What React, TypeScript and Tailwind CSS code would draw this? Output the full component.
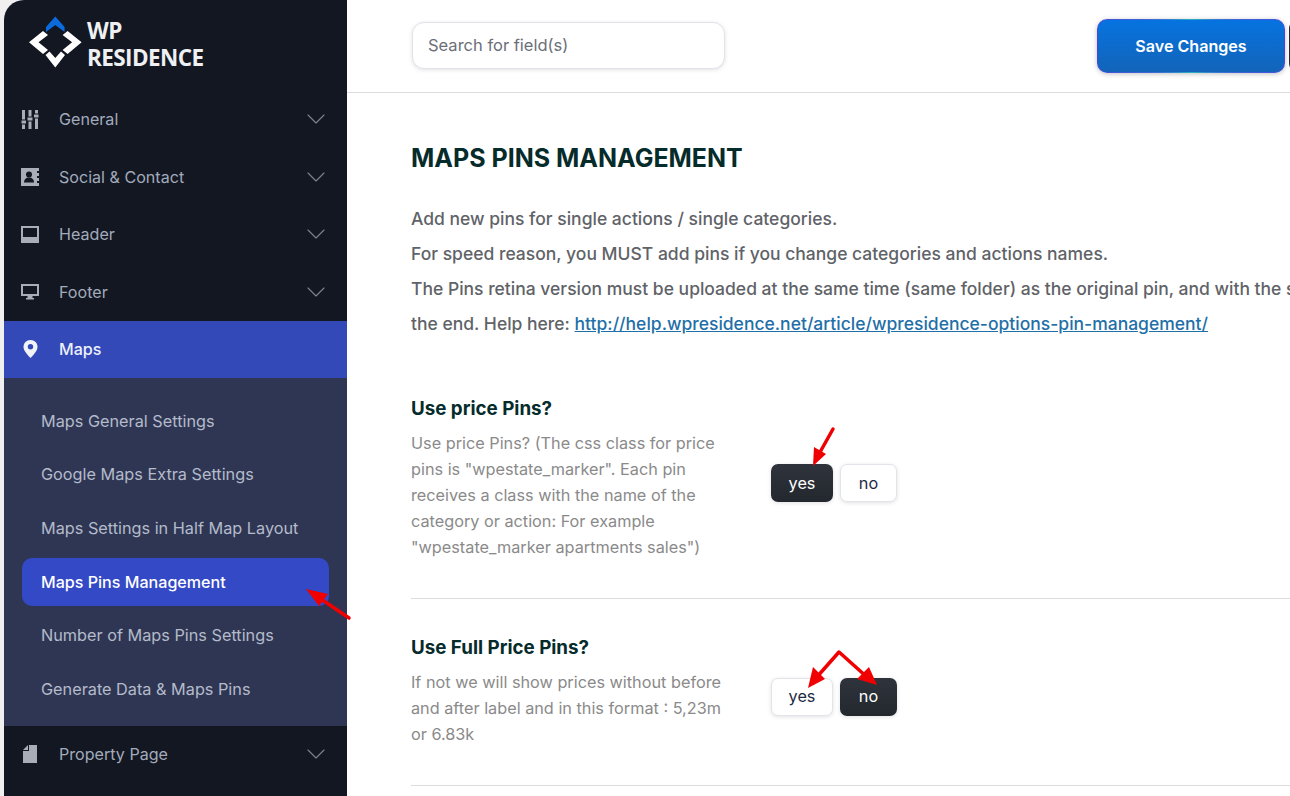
import { ChevronDown } from "lucide-react";
import type { ReactNode } from "react";

const inter = "font-['Inter',sans-serif]";

function SlidersIcon() {
  return (
    <svg width="18" height="19" viewBox="0 0 18 19" fill="#a9adb8">
      <rect x="1" y="0" width="3" height="19" />
      <rect x="7.500" y="0" width="3" height="19" />
      <rect x="14" y="0" width="3" height="19" />
      <rect x="0" y="10" width="5.500" height="4" stroke="#131722" />
      <rect x="6" y="7" width="6" height="4" stroke="#131722" />
      <rect x="12.500" y="4" width="5.500" height="4" stroke="#131722" />
    </svg>
  );
}

function ContactIcon() {
  return (
    <svg width="18" height="18" viewBox="0 0 18 18">
      <rect x="0" y="0" width="18" height="18" fill="#a9adb8" />
      <rect x="16" y="3" width="2" height="2" fill="#131722" />
      <rect x="16" y="8" width="2" height="2" fill="#131722" />
      <rect x="16" y="13" width="2" height="2" fill="#131722" />
      <circle cx="8" cy="6.500" r="3" fill="#131722" />
      <path d="M3 14.500c0-3 2-5 5-5s5 2 5 5z" fill="#131722" />
    </svg>
  );
}

function HeaderIcon() {
  return (
    <svg width="18" height="17" viewBox="0 0 18 17">
      <rect x="0" y="0" width="18" height="17" fill="#a9adb8" />
      <rect x="2" y="2" width="14" height="9" fill="#131722" />
    </svg>
  );
}

function FooterIcon() {
  return (
    <svg width="18" height="16" viewBox="0 0 18 16">
      <rect x="0" y="0" width="18" height="12" fill="#a9adb8" />
      <rect x="2" y="2" width="14" height="8" fill="#131722" />
      <rect x="6.500" y="12" width="5" height="2" fill="#a9adb8" />
      <rect x="5" y="14" width="8" height="1.500" fill="#a9adb8" />
    </svg>
  );
}

function PinIcon() {
  return (
    <svg width="15" height="18" viewBox="0 0 15 18">
      <path d="M7.500 0C3.400 0 .5 3 .5 6.900c0 3.300 3.800 8 7 11 3.200-3 7-7.700 7-11C14.500 3 11.600 0 7.500 0z" fill="#f1f3fb" />
      <circle cx="7.500" cy="6.800" r="2.700" fill="#3349b8" />
    </svg>
  );
}

function PageIcon() {
  return (
    <svg width="14" height="18" viewBox="0 0 14 18" fill="#a9adb8">
      <path d="M0 5 5 0v5z" />
      <path d="M0 6h6V0h8v18H0z" />
    </svg>
  );
}

function LogoMark() {
  return (
    <svg width="60" height="56" viewBox="24 15 60 56">
      <polygon points="46,27 55.300,16.500 64.600,27 64.600,32 55.300,25 46,32" fill="#0b6bdc" />
      <polygon points="43,31 29,42.300 43,54 48,50 38.500,42.300 48,35" fill="#fff" />
      <polygon points="67.600,31 81.600,42.300 67.600,54 62.600,50 72.100,42.300 62.600,35" fill="#fff" />
      <polygon points="45.500,55 55.300,67.500 65,55 61,51.500 55.300,58 49.500,51.500" fill="#fff" />
    </svg>
  );
}

function NavRow({ icon, label }: { icon: ReactNode; label: string }) {
  return (
    <div className="flex h-[57.5px] items-center pl-[17px] pr-[15px]">
      <div className="flex w-[18px] justify-center">{icon}</div>
      <span className="ml-[20px] flex-1 text-[16.1px] text-[#a2abbb]">{label}</span>
      <ChevronDown size={32} strokeWidth={0.85} className="text-[#7d838f]" />
    </div>
  );
}

function Toggle({ label, active, width }: { label: string; active: boolean; width: string }) {
  return (
    <div
      className={`flex h-[38px] items-center justify-center rounded-[7px] text-[16.25px] shadow-[0_1px_4px_rgba(0,0,0,0.12)] ${width} ${
        active ? "bg-gradient-to-b from-[#2f343c] to-[#23272e] text-white" : "border border-[#e3e4ea] bg-white text-[#1d2a44]"
      }`}
    >
      {label}
    </div>
  );
}

function OptionRow({
  title,
  description,
  yes,
  buttonsClass,
}: {
  title: string;
  description: string;
  yes: boolean;
  buttonsClass: string;
}) {
  return (
    <div className="border-b border-[#dcdcde] pb-[38px]">
      <h2 className="text-[18.75px] font-bold leading-[28px] text-[#062b2b]">{title}</h2>
      <div className="mt-[7px] flex items-center">
        <p className="w-[320px] text-[16.25px] leading-[26px] text-[#8a8a8a]">{description}</p>
        <div className={`ml-[40px] flex gap-[7px] ${buttonsClass}`}>
          <Toggle label="yes" active={yes} width="w-[62px]" />
          <Toggle label="no" active={!yes} width="w-[57px]" />
        </div>
      </div>
    </div>
  );
}

// red annotations drawn on top of the screenshot
function Annotations() {
  return (
    <svg className="pointer-events-none absolute left-0 top-0" width="1290" height="796" fill="none">
      <g stroke="#f00000" strokeWidth="3.5" strokeLinecap="round" strokeLinejoin="round">
        <path d="M349 618 318 597" />
        <path d="M833 429 819 454" />
        <path d="M816 678 839 652 868 678" />
      </g>
      <g fill="#f00000">
        <path d="M306 589 328 594 319 606z" />
        <path d="M813 466 814 447 826 454z" />
        <path d="M808 688 813 667 825 679z" />
        <path d="M877 685 857 679 869 667z" />
      </g>
    </svg>
  );
}

export default function App() {
  const subItems = [
    "Maps General Settings",
    "Google Maps Extra Settings",
    "Maps Settings in Half Map Layout",
    "Maps Pins Management",
    "Number of Maps Pins Settings",
    "Generate Data & Maps Pins",
  ];

  return (
    <div className={`relative flex h-[796px] w-[1290px] overflow-hidden bg-[#f0f0f1] ${inter}`}>
      <aside className="ml-[4px] w-[343px] shrink-0 overflow-hidden rounded-tl-[20px] bg-[#131722]">
        <div className="flex h-[90.5px] items-start pl-[20px] pt-[15px]">
          <LogoMark />
          <div className="ml-[3px] mt-[2px] font-['Open_Sans',sans-serif] text-[22.5px] font-bold leading-[27px] tracking-[-0.6px] text-[#eef0f2]">
            <div>WP</div>
            <div>RESIDENCE</div>
          </div>
        </div>
        <NavRow icon={<SlidersIcon />} label="General" />
        <NavRow icon={<ContactIcon />} label="Social & Contact" />
        <NavRow icon={<HeaderIcon />} label="Header" />
        <NavRow icon={<FooterIcon />} label="Footer" />
        <div className="flex h-[57.5px] items-center bg-[#3349b8] pl-[17px]">
          <div className="flex w-[18px] justify-center">
            <PinIcon />
          </div>
          <span className="ml-[20px] text-[16.1px] font-medium text-[#eef1fb]">Maps</span>
        </div>
        <div className="flex h-[347.5px] flex-col gap-[5.7px] bg-[#2f3654] pl-[18px] pr-[18px] pt-[18.7px]">
          {subItems.map((item) => (
            <div
              key={item}
              className={`flex h-[48px] shrink-0 items-center rounded-[10px] pl-[19px] ${
                item === "Maps Pins Management" ? "bg-[#3349c6] text-[16.1px] font-medium text-white" : "text-[16.25px] text-[#b4bbca]"
              }`}
            >
              {item}
            </div>
          ))}
        </div>
        <NavRow icon={<PageIcon />} label="Property Page" />
      </aside>

      <main className="min-w-0 flex-1 bg-white">
        <header className="flex h-[93px] items-start border-b border-[#dcdcde] pl-[65px]">
          <div className="mt-[22px] flex h-[47px] w-[313px] shrink-0 items-center rounded-[12px] border border-[#e2e3e9] bg-white pl-[15px] text-[16.5px] text-[#6b6f78] shadow-[0_1px_4px_rgba(0,0,0,0.12)]">
            Search for field(s)
          </div>
          <div className="ml-[372px] mt-[19px] h-[54px] w-[188px] shrink-0 rounded-[10px] bg-[conic-gradient(#27b3c0,#4a3fe0,#27b3c0,#4a3fe0,#27b3c0)] p-px shadow-[0_1px_5px_rgba(0,0,0,0.25)]">
            <div className="flex h-full items-center justify-center rounded-[9px] bg-gradient-to-b from-[#0573e0] to-[#1264b8] text-[16.1px] font-semibold text-white">
              Save Changes
            </div>
          </div>
          <div className="ml-[4px] mt-[19px] h-[54px] w-[20px] shrink-0 rounded-l-[10px] bg-[#23272e]" />
        </header>

        <div className="pl-[64px]">
          <h1 className="mt-[46px] text-[25px] font-bold leading-[39px] text-[#062b2b]">MAPS PINS MANAGEMENT</h1>
          <div className="mt-[23px] whitespace-nowrap text-[17.5px] font-medium leading-[35px] text-[#5f6368]">
            <p>Add new pins for single actions / single categories.</p>
            <p>For speed reason, you MUST add pins if you change categories and actions names.</p>
            <p>The Pins retina version must be uploaded at the same time (same folder) as the original pin, and with the same name plus _2x at</p>
            <p>
              the end. Help here:{" "}
              <a className="text-[#1f6fa8] underline" href="#pins">
                http://help.wpresidence.net/article/wpresidence-options-pin-management/
              </a>
            </p>
          </div>
          <div className="mt-[54px]">
            <OptionRow
              title="Use price Pins?"
              description={'Use price Pins? (The css class for price pins is "wpestate_marker". Each pin receives a class with the name of the category or action: For example "wpestate_marker apartments sales")'}
              yes={true}
              buttonsClass="mb-[24px]"
            />
          </div>
          <div className="mt-[35px]">
            <OptionRow
              title="Use Full Price Pins?"
              description="If not we will show prices without before and after label and in this format : 5,23m or 6.83k"
              yes={false}
              buttonsClass="mb-[23px]"
            />
          </div>
        </div>
      </main>

      <Annotations />
    </div>
  );
}
